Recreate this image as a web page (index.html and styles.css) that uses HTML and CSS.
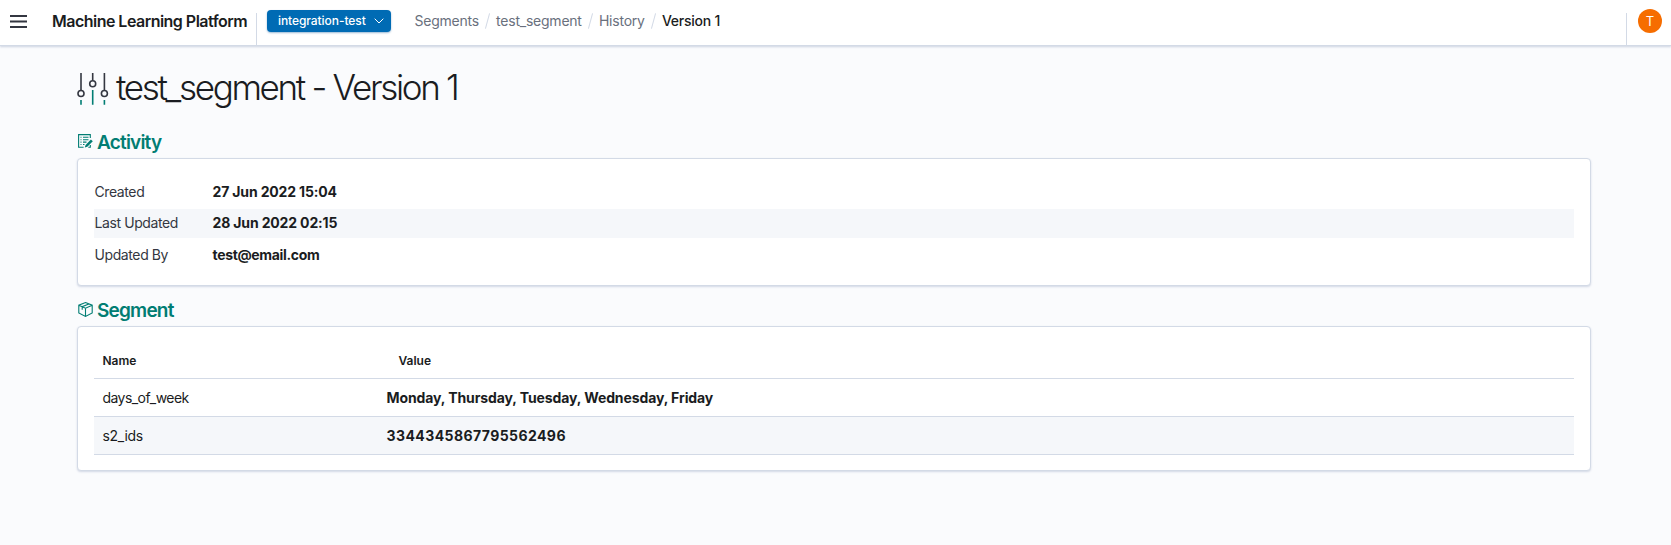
FILE: index.html
```html
<!DOCTYPE html>
<html lang="en">
<head>
<meta charset="utf-8">
<title>test_segment - Version 1</title>
<link rel="stylesheet" href="styles.css">
</head>
<body>
<header class="header">
  <svg class="menu-icon" width="17" height="13" viewBox="0 0 17 13"><path d="M0 1h17M0 6.500h17M0 12h17"/></svg>
  <div class="brand"><span>Machine Learning Platform</span></div>
  <button class="project"><span class="project-name">integration-test</span><svg class="chevron" width="10" height="6" viewBox="0 0 10 6"><path d="M.7 .7 5 5 9.300 .7"/></svg></button>
  <nav class="crumbs">
    <a>Segments</a><i class="slash"></i><a>test_segment</a><i class="slash"></i><a>History</a><i class="slash"></i><a class="current">Version 1</a>
  </nav>
  <div class="account"><span class="avatar">T</span></div>
</header>
<main class="page">
  <h1 class="title">
    <svg class="title-icon" width="32" height="32" viewBox="0 0 32 32"><g class="dark"><path d="M4 0v17.500M15.700 0v7.500M27.400 0v17.500"/><circle cx="4" cy="20.500" r="3"/><circle cx="15.700" cy="10.700" r="3"/><circle cx="27.400" cy="20.500" r="3"/></g><path class="accent" d="M4 27v4.700M15.700 17v14.700M27.400 27v4.700"/></svg>
    <span>test_segment - Version 1</span>
  </h1>
  <h2 class="section-title">
    <svg width="15" height="15" viewBox="0 0 15 15"><path d="M12.300 4V.6H.6v12.700h5M12.300 11v2.300h-2M2.500 3.300h1M5 3.300h5.500M2.500 5.700h1M5 5.700h5.500M2.500 8.100h1M5 8.100h3.500M2.500 10.500h1M5 10.500h1.500"/><path class="solid" d="m12.900 5.500 1.900 1.700-5.500 5.500-2.500.8.800-2.600z"/></svg>
    <span>Activity</span>
  </h2>
  <section class="panel activity">
    <dl class="list">
      <div class="item"><dt>Created</dt><dd>27 Jun 2022 15:04</dd></div>
      <div class="item striped"><dt>Last Updated</dt><dd>28 Jun 2022 02:15</dd></div>
      <div class="item"><dt>Updated By</dt><dd class="email">test@email.com</dd></div>
    </dl>
  </section>
  <h2 class="section-title second">
    <svg width="15" height="15" viewBox="0 0 15 15"><path d="M7.500 .6 14.200 3.200v7.800l-6.700 3.400L.8 11V3.200zM.8 3.200l6.700 3 6.700-3M7.500 6.200v8.200M10.800 1.900 4.200 4.700v3"/></svg>
    <span>Segment</span>
  </h2>
  <section class="panel segment">
    <div class="row head"><span>Name</span><span class="value-head">Value</span></div>
    <div class="row"><span class="name">days_of_week</span><b>Monday, Thursday, Tuesday, Wednesday, Friday</b></div>
    <div class="row striped"><span class="name short">s2_ids</span><b class="digits">3344345867795562496</b></div>
  </section>
</main>
</body>
</html>
```
FILE: styles.css
```css
* { box-sizing: border-box; }
body { margin: 0; min-height: 545px; background: #fafbfd; color: #1a1c21; font-family: Inter, "Liberation Sans", sans-serif; font-size: 14px; line-height: 20px; }
svg { display: block; flex: none; fill: none; }
span, a, b, dt, dd { white-space: nowrap; }
.header { display: flex; height: 46px; background: #fff; border-bottom: 1px solid #d3dae6; box-shadow: 0 1px 2px rgba(120, 135, 175, .35); padding-left: 10px; }
.menu-icon { margin-top: 15px; stroke: #343741; stroke-width: 1.900; }
.brand { width: 230px; margin-top: 13px; padding-left: 25px; border-right: 1px solid #d3dae6; font-size: 16px; font-weight: 600; line-height: 17px; letter-spacing: -.52px; }
.project { display: flex; align-items: center; justify-content: space-between; width: 124px; height: 22px; margin: 10px 0 0 10px; padding: 0 7px 0 11px; border: 0; border-radius: 4px; background: #006bb4; color: #fff; font: 500 12px/22px Inter, sans-serif; letter-spacing: -.07px; box-shadow: 0 1px 2px rgba(0, 80, 150, .4); }
.chevron { stroke: #fff; stroke-width: 1; }
.crumbs { display: flex; align-items: center; height: 20px; margin: 11px 0 0 23.500px; color: #69707d; letter-spacing: -.23px; }
.slash { width: 1px; height: 16px; margin: 0 8.100px; background: #d3dae6; transform: rotate(15deg); }
.current { color: #1a1c21; font-weight: 500; }
.account { width: 45px; margin: 13px 0 0 auto; border-left: 1px solid #d3dae6; }
.avatar { display: block; width: 24px; height: 24px; margin: -4px 0 0 11px; border-radius: 50%; background: #f66d00; color: #fff; font-size: 13px; line-height: 24px; text-align: center; }
.page { padding: 21px 80px 0 77px; }
.title { display: flex; align-items: center; height: 40px; margin: 0; gap: 7px; font-size: 35px; font-weight: 300; line-height: 40px; letter-spacing: -2.330px; }
.title-icon { margin-top: 4px; stroke-width: 1.600; }
.dark { stroke: #343741; }
.accent { stroke: #017d73; }
.section-title { display: flex; align-items: center; height: 24px; margin: 24px 0 3px; padding-left: 1px; gap: 4px; color: #017d73; font-size: 19px; font-weight: 600; line-height: 24px; letter-spacing: -.8px; }
.section-title svg { margin-top: -3px; stroke: currentColor; stroke-width: 1.100; }
.solid { fill: currentColor; stroke: none; }
.section-title.second { margin: 13px 0 3px; }
.section-title.second svg { margin-top: -4px; }
.panel { width: 1514px; border: 1px solid #d3dae6; border-radius: 4px; background: #fff; box-shadow: 0 1px 2px rgba(120, 135, 175, .3); padding: 18px 16px; }
.activity { height: 128px; }
.list { display: grid; grid-template-rows: repeat(3, 29px); row-gap: 2.500px; margin: 0; }
.item { display: flex; align-items: center; }
.item dt { width: 118px; padding-left: .5px; color: #343741; letter-spacing: -.4px; }
.item dd { margin: 0; padding-left: .5px; font-weight: 700; letter-spacing: -.15px; }
.item .email { letter-spacing: -.34px; }
.striped { background: #f5f7fa; }
.segment { height: 145px; padding: 17px 16px; }
.row { display: grid; grid-template-columns: 284px 1fr; align-items: center; height: 38px; padding-left: 8.500px; border-bottom: 1px solid #d3dae6; }
.row.head { height: 35px; font-size: 12px; font-weight: 600; }
.value-head { padding-left: 12px; }
.name { letter-spacing: -.56px; }
.short { letter-spacing: -.3px; }
.row b { font-weight: 700; letter-spacing: -.1px; }
.row .digits { letter-spacing: .42px; }
```
